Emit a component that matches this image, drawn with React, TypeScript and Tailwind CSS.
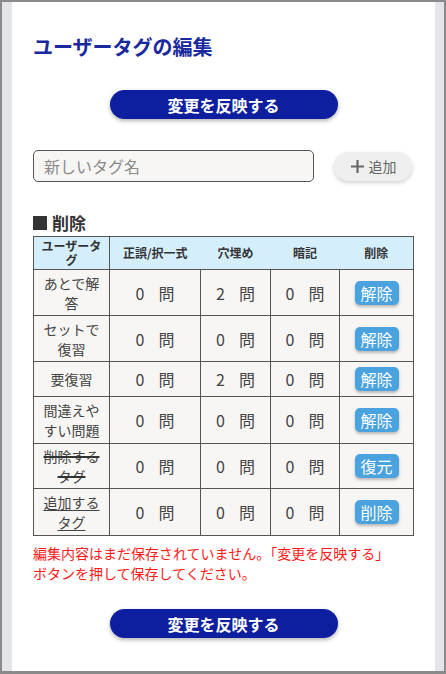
import React from "react";

type Row = {
  name: string;
  counts: [number, number, number];
  action: string;
  style?: "strike" | "underline";
};

const rows: Row[] = [
  { name: "あとで解答", counts: [0, 2, 0], action: "解除" },
  { name: "セットで復習", counts: [0, 0, 0], action: "解除" },
  { name: "要復習", counts: [0, 2, 0], action: "解除" },
  { name: "間違えやすい問題", counts: [0, 0, 0], action: "解除" },
  { name: "削除するタグ", counts: [0, 0, 0], action: "復元", style: "strike" },
  { name: "追加するタグ", counts: [0, 0, 0], action: "削除", style: "underline" },
];

const rowHeights = ["h-[46px]", "h-[46px]", "h-[35px]", "h-[47px]", "h-[45px]", "h-[47px]"];

const ApplyButton = () => (
  <div className="flex justify-center">
    <button className="w-[228px] h-[29px] rounded-full bg-[#0d1f9e] text-white text-[16px] font-bold leading-none shadow-[0_2px_4px_rgba(0,0,0,0.3)]">
      変更を反映する
    </button>
  </div>
);

export default function App() {
  return (
    <div
      className="w-[446px] h-[674px] border-2 border-b-[3px] border-[#8a8a8a] bg-[#e3e5e9] px-[10px] flex"
      style={{ fontFamily: '"Noto Sans CJK JP", "Noto Sans", sans-serif' }}
    >
      <div className="flex-1 bg-white px-[21px] pt-[31px] flex flex-col">
        {/* Title */}
        <h1 className="text-[20px] font-bold leading-[28px] text-[#1a2a9e]">ユーザータグの編集</h1>

        <div className="mt-[29px]">
          <ApplyButton />
        </div>

        {/* New tag input */}
        <div className="mt-[31px] flex items-center">
          <div className="w-[281px] h-[32px] rounded-[5px] border border-[#555] bg-[#f7f6f5] flex items-center px-[10px]">
            <span className="text-[16px] text-[#8a8a8a] leading-none">新しいタグ名</span>
          </div>
          <button className="ml-[20px] w-[78px] h-[29px] rounded-full bg-[#efefef] shadow-[0_2px_4px_rgba(0,0,0,0.18)] flex items-center justify-center gap-[4px] text-[#666] text-[14px] leading-none">
            <svg width="15" height="15" viewBox="0 0 15 15" fill="none">
              <path d="M7.5 1V14M1 7.5H14" stroke="#666" strokeWidth="2.2" />
            </svg>
            <span>追加</span>
          </button>
        </div>

        {/* Delete section */}
        <div className="mt-[29px] flex items-center gap-[5px] text-[17px] font-bold leading-[24px] text-[#333]">
          <span className="inline-block w-[14px] h-[14px] bg-[#333]" />
          <span>削除</span>
        </div>

        <table className="mt-[1px] w-[380px] border-collapse table-fixed text-[#444]">
          <colgroup>
            <col className="w-[76px]" />
            <col className="w-[91px]" />
            <col className="w-[70px]" />
            <col className="w-[69px]" />
            <col className="w-[74px]" />
          </colgroup>
          <thead>
            <tr className="h-[33px] bg-[#d4eefc] text-[12px] font-bold leading-[14px] text-[#333]">
              <th className="border border-[#555] px-[6px] font-bold">ユーザータグ</th>
              <th className="border-y border-[#555] font-bold">正誤/択一式</th>
              <th className="border-y border-[#555] font-bold">穴埋め</th>
              <th className="border-y border-[#555] font-bold">暗記</th>
              <th className="border border-l-0 border-[#555] font-bold">削除</th>
            </tr>
          </thead>
          <tbody>
            {rows.map((r, i) => (
              <tr key={i} className={`${rowHeights[i]} bg-[#f8f6f4]`}>
                <td className="border border-[#555] px-[6px] text-center text-[14px] leading-[20px]">
                  <span
                    className={
                      r.style === "strike"
                        ? "line-through decoration-[#333] decoration-[1.5px]"
                        : r.style === "underline"
                        ? "underline underline-offset-2"
                        : ""
                    }
                  >
                    {r.name}
                  </span>
                </td>
                {r.counts.map((c, j) => (
                  <td key={j} className="border border-[#555] text-center text-[16px] leading-none">
                    <span>{c}</span>
                    <span className="ml-[14px]">問</span>
                  </td>
                ))}
                <td className="border border-[#555] text-center">
                  <button className="w-[44px] h-[24px] rounded-[5px] bg-[#4aa3df] text-white text-[16px] leading-none shadow-[0_2px_3px_rgba(0,0,0,0.25)]">
                    {r.action}
                  </button>
                </td>
              </tr>
            ))}
          </tbody>
        </table>

        <p className="mt-[7px] text-[14px] leading-[20px] text-[#ff1a1a]">
          編集内容はまだ保存されていません。「変更を反映する」
          <br />
          ボタンを押して保存してください。
        </p>

        <div className="mt-[26px]">
          <ApplyButton />
        </div>
      </div>
    </div>
  );
}
